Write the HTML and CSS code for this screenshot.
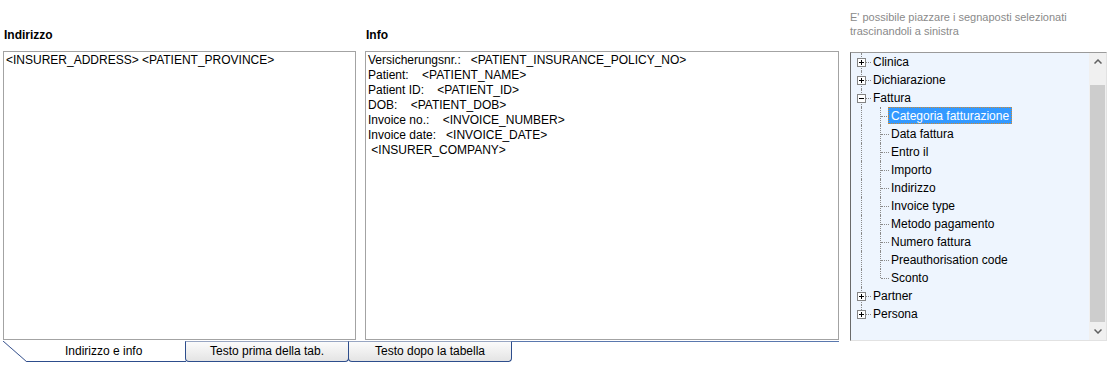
FILE: index.html
```html
<!DOCTYPE html>
<html>
<head>
<meta charset="utf-8">
<link rel="stylesheet" href="styles.css">
</head>
<body>
<div class="page">
  <div class="editor">
    <div class="cols">
      <div class="col col-addr">
        <div class="heading">Indirizzo</div>
        <div class="field">&lt;INSURER_ADDRESS&gt; &lt;PATIENT_PROVINCE&gt;</div>
      </div>
      <div class="col col-info">
        <div class="heading">Info</div>
        <div class="field">Versicherungsnr.:&nbsp;&nbsp; &lt;PATIENT_INSURANCE_POLICY_NO&gt;
Patient:&nbsp;&nbsp;&nbsp; &lt;PATIENT_NAME&gt;
Patient ID:&nbsp;&nbsp;&nbsp; &lt;PATIENT_ID&gt;
DOB:&nbsp;&nbsp;&nbsp; &lt;PATIENT_DOB&gt;
Invoice no.:&nbsp;&nbsp;&nbsp; &lt;INVOICE_NUMBER&gt;
Invoice date:&nbsp;&nbsp; &lt;INVOICE_DATE&gt;
 &lt;INSURER_COMPANY&gt;</div>
      </div>
    </div>
    <div class="tabs">
      <div class="tab active"><span class="slant"></span><span class="tab-label">Indirizzo e info</span></div>
      <div class="tab">Testo prima della tab.</div>
      <div class="tab">Testo dopo la tabella</div>
      <div class="tab-fill"></div>
    </div>
  </div>

  <div class="side">
    <div class="hint">E' possibile piazzare i segnaposti selezionati<br>trascinandoli a sinistra</div>
    <div class="treebox">
      <div class="tree">
        <div class="row"><span class="g v h first"><svg class="exp" width="9" height="9" viewBox="0 0 9 9"><rect x="0.5" y="0.5" width="8" height="8" fill="#fff" stroke="#848484"/><path d="M2 4.5h5M4.5 2v5" stroke="#000"/></svg></span><span class="lbl">Clinica</span></div>
        <div class="row"><span class="g v h"><svg class="exp" width="9" height="9" viewBox="0 0 9 9"><rect x="0.5" y="0.5" width="8" height="8" fill="#fff" stroke="#848484"/><path d="M2 4.5h5M4.5 2v5" stroke="#000"/></svg></span><span class="lbl">Dichiarazione</span></div>
        <div class="row"><span class="g v h"><svg class="exp" width="9" height="9" viewBox="0 0 9 9"><rect x="0.5" y="0.5" width="8" height="8" fill="#fff" stroke="#848484"/><path d="M2 4.5h5" stroke="#000"/></svg></span><span class="lbl">Fattura</span></div>
        <div class="row"><span class="g v"></span><span class="g2 v h"></span><span class="lbl sel">Categoria fatturazione</span></div>
        <div class="row"><span class="g v"></span><span class="g2 v h"></span><span class="lbl">Data fattura</span></div>
        <div class="row"><span class="g v"></span><span class="g2 v h"></span><span class="lbl">Entro il</span></div>
        <div class="row"><span class="g v"></span><span class="g2 v h"></span><span class="lbl">Importo</span></div>
        <div class="row"><span class="g v"></span><span class="g2 v h"></span><span class="lbl">Indirizzo</span></div>
        <div class="row"><span class="g v"></span><span class="g2 v h"></span><span class="lbl">Invoice type</span></div>
        <div class="row"><span class="g v"></span><span class="g2 v h"></span><span class="lbl">Metodo pagamento</span></div>
        <div class="row"><span class="g v"></span><span class="g2 v h"></span><span class="lbl">Numero fattura</span></div>
        <div class="row"><span class="g v"></span><span class="g2 v h"></span><span class="lbl">Preauthorisation code</span></div>
        <div class="row"><span class="g v"></span><span class="g2 v h end"></span><span class="lbl">Sconto</span></div>
        <div class="row"><span class="g v h"><svg class="exp" width="9" height="9" viewBox="0 0 9 9"><rect x="0.5" y="0.5" width="8" height="8" fill="#fff" stroke="#848484"/><path d="M2 4.5h5M4.5 2v5" stroke="#000"/></svg></span><span class="lbl">Partner</span></div>
        <div class="row"><span class="g v h end"><svg class="exp" width="9" height="9" viewBox="0 0 9 9"><rect x="0.5" y="0.5" width="8" height="8" fill="#fff" stroke="#848484"/><path d="M2 4.5h5M4.5 2v5" stroke="#000"/></svg></span><span class="lbl">Persona</span></div>
      </div>
      <div class="scrollbar">
        <div class="sb-btn"><svg width="8" height="5" viewBox="0 0 8 5"><path d="M0.5 4.5L4 1L7.5 4.5" fill="none" stroke="#606060" stroke-width="1.5"/></svg></div>
        <div class="sb-track"><div class="sb-thumb"></div></div>
        <div class="sb-btn"><svg width="8" height="5" viewBox="0 0 8 5"><path d="M0.5 0.5L4 4L7.5 0.5" fill="none" stroke="#606060" stroke-width="1.5"/></svg></div>
      </div>
    </div>
  </div>
</div>
</body>
</html>
```

FILE: styles.css
```css
* { box-sizing: border-box; }
html, body { margin: 0; padding: 0; background: #fff; }
body {
  font-family: "Liberation Sans", Arial, sans-serif;
  font-size: 12px;
  color: #000;
}
.page {
  display: flex;
  padding-left: 3px;
  height: 366px;
}
.editor {
  width: 836px;
  display: flex;
  flex-direction: column;
}
.cols {
  display: flex;
  gap: 9px;
}
.col-addr { width: 353px; }
.col-info { width: 474px; }
.heading {
  font-weight: bold;
  height: 51px;
  padding-top: 28px;
  padding-left: 1px;
  line-height: 15px;
}
.field {
  height: 289px;
  border: 1px solid #a3a3a3;
  padding: 1px 2px;
  line-height: 15px;
  white-space: pre;
  background: #fff;
}

/* tabs */
.tabs {
  display: flex;
  height: 21px;
  margin-top: 1px;
}
.tab {
  width: 164px;
  height: 21px;
  border: 1px solid #2d4d8c;
  border-top-color: #98a6c2;
  border-radius: 0 0 4px 4px;
  background: linear-gradient(#fbfbfb, #e4e4e4);
  text-align: center;
  line-height: 19px;
  color: #000;
}
.tab + .tab { margin-left: -1px; }
.tab.active {
  width: 183px;
  display: flex;
  border: none;
  border-radius: 0;
  background: #fff;
  text-align: left;
}
.slant {
  width: 24px;
  height: 21px;
  flex: none;
  background: linear-gradient(to top right, transparent calc(50% - 0.8px), #3c5690 50%, transparent calc(50% + 0.8px));
}
.tab-label {
  flex: 1;
  border-bottom: 1px solid #2d4d8c;
  padding-left: 38px;
  line-height: 20px;
}
.tab-fill {
  flex: 1;
  border-top: 1px solid #5a78ae;
  height: 1px;
}

/* side panel */
.side {
  width: 257px;
  margin-left: 11px;
  display: flex;
  flex-direction: column;
}
.hint {
  font-size: 11px;
  line-height: 14px;
  color: #8a8a8a;
  padding-top: 10px;
  height: 52px;
}
.treebox {
  height: 289px;
  display: flex;
  border: 1px solid;
  border-color: #9a9a9a #e2e2e2 #e2e2e2 #6a6a6a;
  background: #eef5fe;
}
.tree {
  flex: 1;
  padding-left: 1px;
}
.row {
  display: flex;
  height: 18px;
  align-items: center;
}
.g, .g2 {
  position: relative;
  flex: none;
  height: 18px;
}
.g { width: 19px; }
.g2 { width: 18px; }
.v::before {
  content: "";
  position: absolute;
  left: 9px;
  top: 0;
  bottom: 0;
  border-left: 1px dotted #8a8a8a;
}
.v.end::before { bottom: 9px; }
.h::after {
  content: "";
  position: absolute;
  left: 10px;
  right: 0;
  top: 9px;
  border-top: 1px dotted #8a8a8a;
}
.exp {
  position: absolute;
  left: 5px;
  top: 5px;
  z-index: 1;
  display: block;
}
.lbl {
  padding: 0 2px;
  line-height: 16px;
  height: 17px;
  white-space: nowrap;
  border: 1px solid transparent;
  margin-left: -1px;
  margin-top: -1px;
}
.lbl.sel {
  background: #3399ff;
  color: #fff;
  border: 1px dotted #d08a30;
}

/* scrollbar */
.scrollbar {
  width: 17px;
  flex: none;
  background: #f0f0f0;
  display: flex;
  flex-direction: column;
}
.sb-btn {
  height: 17px;
  display: flex;
  align-items: center;
  justify-content: center;
}
.sb-track {
  flex: 1;
  padding: 15px 1px 0 1px;
}
.sb-thumb {
  height: 237px;
  background: #cdcdcd;
}
```
